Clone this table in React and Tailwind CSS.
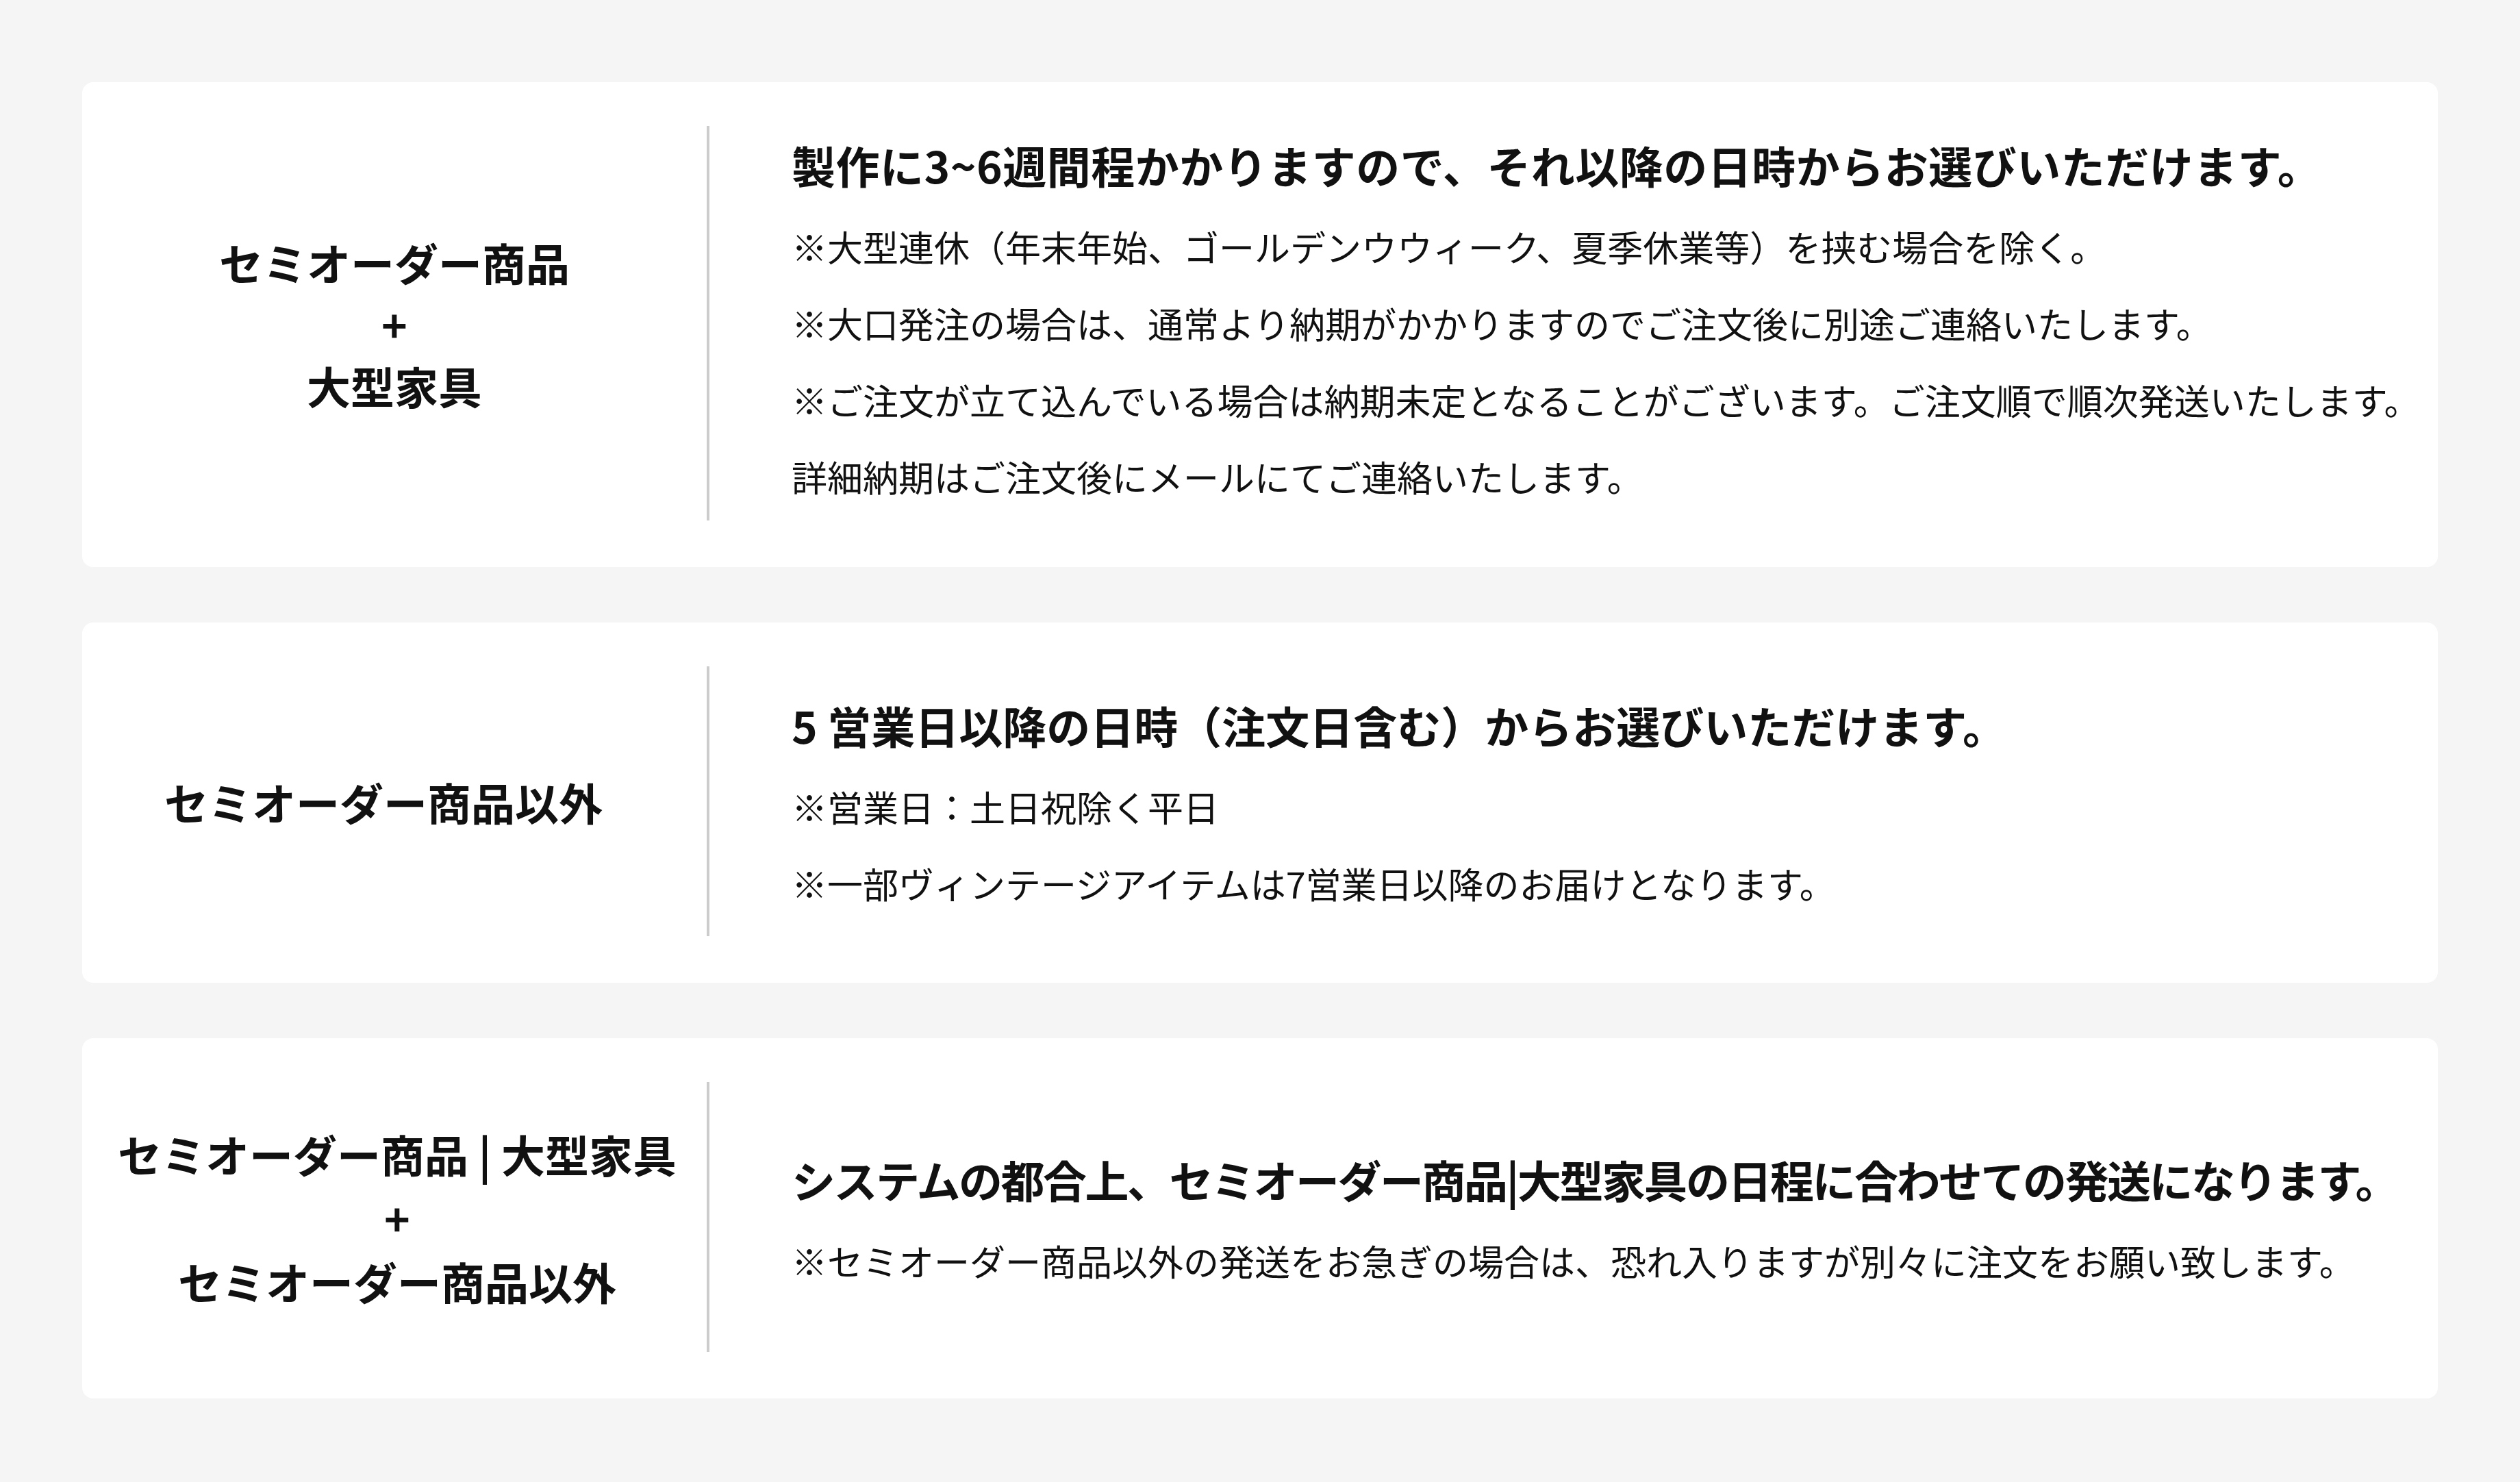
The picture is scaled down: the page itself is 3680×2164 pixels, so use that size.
// App.jsx
const rows = [
  {
    label: ["セミオーダー商品", "+", "大型家具"],
    heading: "製作に3~6週間程かかりますので、それ以降の日時からお選びいただけます。",
    headingClass: "tracking-[0.5px]",
    bodyClass: "pt-[12px] pb-[28px]",
    notes: [
      "※大型連休（年末年始、ゴールデンウウィーク、夏季休業等）を挟む場合を除く。",
      "※大口発注の場合は、通常より納期がかかりますのでご注文後に別途ご連絡いたします。",
      "※ご注文が立て込んでいる場合は納期未定となることがございます。ご注文順で順次発送いたします。",
      "詳細納期はご注文後にメールにてご連絡いたします。",
    ],
  },
  {
    label: ["セミオーダー商品以外"],
    labelClass: "pr-[32px] leading-[91px]",
    heading: "5 営業日以降の日時（注文日含む）からお選びいただけます。",
    notes: [
      "※営業日：土日祝除く平日",
      "※一部ヴィンテージアイテムは7営業日以降のお届けとなります。",
    ],
  },
  {
    label: ["セミオーダー商品 | 大型家具", "+", "セミオーダー商品以外"],
    labelClass: "pl-[8px] leading-[93px]",
    heading: "システムの都合上、セミオーダー商品|大型家具の日程に合わせての発送になります。",
    headingClass: "tracking-[-2.5px]",
    notes: [
      "※セミオーダー商品以外の発送をお急ぎの場合は、恐れ入りますが別々に注文をお願い致します。",
    ],
  },
];

function DeliveryRow({
  label,
  labelClass = "leading-[90px]",
  heading,
  headingClass = "",
  bodyClass = "",
  notes,
}) {
  return (
    <div className="bg-white rounded-[16px] pt-[64px] pb-[68px] flex">
      {/* left label column */}
      <div
        className={`w-[912px] shrink-0 flex flex-col items-center justify-center text-center text-[64px] font-bold text-[#111] ${labelClass}`}
      >
        {label.map((line) => (
          <p key={line} className="whitespace-pre">
            {line}
          </p>
        ))}
      </div>

      {/* right details column */}
      <div
        className={`flex-1 min-h-[394px] border-l-[4px] border-[#cccccc] pl-[120px] pr-[40px] flex flex-col justify-center text-[#111] ${bodyClass}`}
      >
        <h3 className={`text-[64px] font-bold leading-[88px] whitespace-nowrap ${headingClass}`}>
          {heading}
        </h3>
        {notes.map((note) => (
          <p
            key={note}
            className="mt-[40px] text-[52px] leading-[72px] whitespace-nowrap"
          >
            {note}
          </p>
        ))}
      </div>
    </div>
  );
}

export default function App() {
  return (
    <div
      className="min-h-screen bg-[#f5f5f5] px-[120px] pt-[120px] pb-[122px] flex flex-col gap-[81px]"
      style={{ fontFamily: '"Noto Sans CJK JP", "Noto Sans", sans-serif' }}
    >
      {rows.map((row) => (
        <DeliveryRow key={row.heading} {...row} />
      ))}
    </div>
  );
}
